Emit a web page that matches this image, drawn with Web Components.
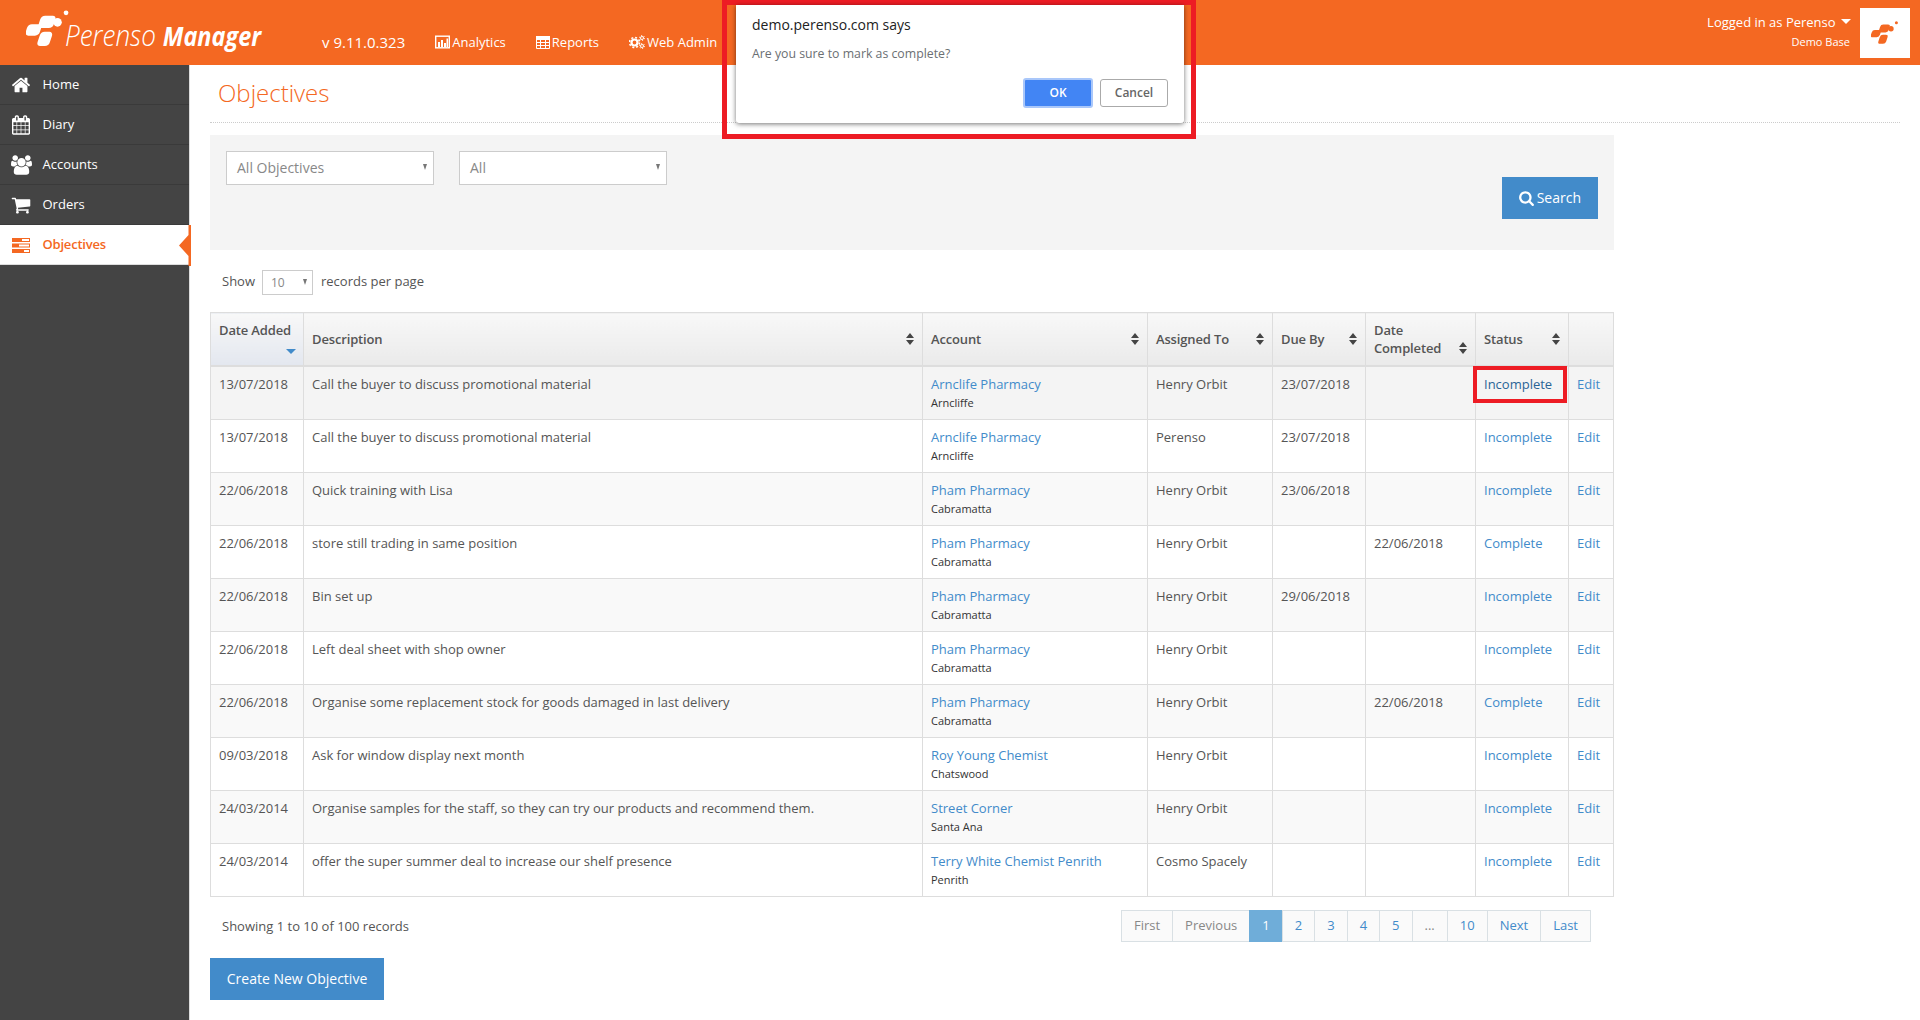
<!DOCTYPE html>
<html lang="en">
<head>
<meta charset="utf-8">
<title>Perenso Manager - Objectives</title>
<style>
  html, body { margin: 0; padding: 0; background: #fff; }
  body { font: 13px/20px "Open Sans", "Liberation Sans", sans-serif; color: #555; width: 1920px; height: 1020px; overflow: hidden; }
  .shell { display: flex; height: 955px; }
</style>
</head>
<body>
<pr-header></pr-header>
<div class="shell">
  <pr-sidenav>
    <pr-nav-item icon="home">Home</pr-nav-item>
    <pr-nav-item icon="calendar">Diary</pr-nav-item>
    <pr-nav-item icon="users">Accounts</pr-nav-item>
    <pr-nav-item icon="cart">Orders</pr-nav-item>
    <pr-nav-item icon="objectives" active>Objectives</pr-nav-item>
  </pr-sidenav>
  <pr-objectives-page></pr-objectives-page>
</div>
<pr-alert></pr-alert>

<script>
const ICONS = {
  home: '<svg viewBox="0 0 1792 1792" width="20" height="20" fill="currentColor"><path d="M1472 992v480q0 26-19 45t-45 19h-384v-384h-256v384h-384q-26 0-45-19t-19-45v-480q0-1 .5-3t.5-3l575-474 575 474q1 2 1 6zm223-69l-62 74q-8 9-21 11h-3q-13 0-21-7l-692-577-692 577q-12 8-24 7-13-2-21-11l-62-74q-8-10-7-23.500t11-21.500l719-599q32-26 76-26t76 26l244 204v-195q0-14 9-23t23-9h192q14 0 23 9t9 23v408l219 182q10 8 11 21.500t-7 23.500z"/></svg>',
  calendar: '<svg viewBox="0 0 1664 1792" width="18" height="20" fill="currentColor"><path d="M128 1664h288v-288h-288v288zm352 0h320v-288h-320v288zm-352-352h288v-320h-288v320zm352 0h320v-320h-320v320zm-352-384h288v-288h-288v288zm736 736h320v-288h-320v288zm-384-736h320v-288h-320v288zm768 736h288v-288h-288v288zm-384-352h320v-320h-320v320zm-352-864v-288q0-13-9.500-22.500t-22.500-9.500h-64q-13 0-22.500 9.500t-9.500 22.500v288q0 13 9.500 22.500t22.500 9.500h64q13 0 22.500-9.500t9.500-22.500zm736 864h288v-320h-288v320zm-384-384h320v-288h-320v288zm384 0h288v-288h-288v288zm32-480v-288q0-13-9.500-22.500t-22.500-9.500h-64q-13 0-22.500 9.500t-9.500 22.500v288q0 13 9.500 22.500t22.500 9.500h64q13 0 22.500-9.500t9.500-22.500zm384-64v1280q0 52-38 90t-90 38h-1408q-52 0-90-38t-38-90v-1280q0-52 38-90t90-38h128v-96q0-66 47-113t113-47h64q66 0 113 47t47 113v96h384v-96q0-66 47-113t113-47h64q66 0 113 47t47 113v96h128q52 0 90 38t38 90z"/></svg>',
  users: '<svg viewBox="0 0 1920 1792" width="21" height="20" fill="currentColor"><path d="M593 896q-162 5-265 128h-134q-82 0-138-40.500t-56-118.500q0-353 124-353 6 0 43.500 21t97.500 42.500 119 21.500q67 0 133-23-5 37-5 66 0 139 81 256zm1071 637q0 120-73 189.500t-194 69.500h-874q-121 0-194-69.500t-73-189.500q0-53 3.500-103.500t14-109 26.500-108.500 43-97.500 62-81 85.500-53.500 111.500-20q10 0 43 21.500t73 48 107 48 135 21.500 135-21.500 107-48 73-48 43-21.500q61 0 111.500 20t85.500 53.500 62 81 43 97.500 26.500 108.500 14 109 3.500 103.500zm-1024-1277q0 106-75 181t-181 75-181-75-75-181 75-181 181-75 181 75 75 181zm704 384q0 159-112.500 271.500t-271.500 112.500-271.500-112.500-112.500-271.500 112.500-271.500 271.500-112.500 271.500 112.500 112.500 271.500zm576 225q0 78-56 118.500t-138 40.500h-134q-103-123-265-128 81-117 81-256 0-29-5-66 66 23 133 23 59 0 119-21.500t97.500-42.500 43.500-21q124 0 124 353zm-128-609q0 106-75 181t-181 75-181-75-75-181 75-181 181-75 181 75 75 181z"/></svg>',
  cart: '<svg viewBox="0 0 1792 1792" width="20" height="20" fill="currentColor"><path d="M704 1536q0 52-38 90t-90 38-90-38-38-90 38-90 90-38 90 38 38 90zm896 0q0 52-38 90t-90 38-90-38-38-90 38-90 90-38 90 38 38 90zm128-1088v512q0 24-16.500 42.500t-40.500 21.500l-1044 122q13 60 13 70 0 16-24 64h920q26 0 45 19t19 45-19 45-45 19h-1024q-26 0-45-19t-19-45q0-11 8-31.500t16-36 21.500-40 15.500-29.500l-177-823h-204q-26 0-45-19t-19-45 19-45 45-19h256q16 0 28.500 6.500t19.500 15.500 13 24.500 8 26 5.500 29.500 4.500 26h1201q26 0 45 19t19 45z"/></svg>',
  objectives: '<svg viewBox="0 0 18 15" width="18" height="15"><rect width="18" height="4" fill="currentColor"/><rect y="5.500" width="18" height="4" fill="currentColor"/><rect y="11" width="18" height="4" fill="currentColor"/><rect x="10" y="1" width="7" height="2" fill="#fff"/><rect x="7" y="6.500" width="10" height="2" fill="#fff"/><rect x="12" y="12" width="5" height="2" fill="#fff"/></svg>',
  analytics: '<svg viewBox="0 0 15 14" width="15" height="14"><rect x=".7" y="1.200" width="13.600" height="11.600" fill="none" stroke="#fff" stroke-width="1.400"/><path d="M3 7h2v5H3zM6 5h2v7H6zM9 8h2v4H9zM11.500 3.500h1.500V12h-1.500z" fill="#fff"/></svg>',
  table: '<svg viewBox="0 0 14 13" width="14" height="13"><path d="M.5.500h13v12H.500z" fill="none" stroke="#fff"/><path d="M0 .500h14v3H0zM0 6.500h14M0 9.500h14M4.500 3v9M9.500 3v9" fill="none" stroke="#fff"/><rect y=".500" width="14" height="3" fill="#fff"/></svg>',
  cogs: '<svg viewBox="0 0 16 14" width="16" height="14" fill="none" stroke="#fff"><circle cx="5.500" cy="7.500" r="3" stroke-width="2.200"/><circle cx="5.500" cy="7.500" r="5" stroke-width="1.600" stroke-dasharray="2 1.930"/><circle cx="13" cy="3" r="1.500" stroke-width="1"/><circle cx="13" cy="3" r="2.500" stroke-width="1" stroke-dasharray="1.200 1.420"/><circle cx="13" cy="11" r="1.500" stroke-width="1"/><circle cx="13" cy="11" r="2.500" stroke-width="1" stroke-dasharray="1.200 1.420"/></svg>',
  search: '<svg viewBox="0 0 1664 1792" width="15" height="16" fill="currentColor"><path d="M1152 832q0-185-131.500-316.500t-316.500-131.500-316.500 131.500-131.500 316.500 131.500 316.500 316.500 131.500 316.500-131.500 131.500-316.500zm512 832q0 52-38 90t-90 38q-54 0-90-38l-343-342q-179 124-399 124-143 0-273.500-55.500t-225-150-150-225-55.500-273.500 55.500-273.500 150-225 225-150 273.500-55.500 273.500 55.500 225 150 150 225 55.500 273.500q0 220-124 399l343 343q37 37 37 90z"/></svg>'
};

// the four blobs of the Perenso mark
const logoMark = (w, h, fill) => `<svg viewBox="0 0 46 40" width="${w}" height="${h}" fill="${fill}">
  <rect x="0" y="15" width="15" height="12" rx="4" transform="skewX(-18) translate(7 0)"/>
  <rect x="13" y="6" width="16" height="13" rx="4" transform="skewX(-18) translate(5 0)"/>
  <rect x="12" y="23" width="13" height="15" rx="4" transform="skewX(-18) translate(11 0)"/>
  <circle cx="33" cy="13" r="4.500"/>
  <circle cx="42" cy="3" r="2.500"/>
</svg>`;

class PrHeader extends HTMLElement {
  constructor() {
    super();
    this.attachShadow({ mode: 'open' });
    this.shadowRoot.innerHTML = `
      <style>
        :host { display: flex; align-items: center; height: 65px; background: #f46822; color: #fff; padding-left: 26px; box-sizing: border-box; }
        .brand { display: flex; align-items: center; width: 296px; flex: none; }
        .brand svg { margin-top: -7px; flex: none; }
        .brand-text { font-size: 30px; line-height: 34px; font-style: italic; white-space: nowrap; transform: scaleX(.87); transform-origin: left center; margin: 5px 0 0 -5px; }
        .brand-text b { font-weight: 700; font-size: 27px; }
        .brand-text span { font-weight: 300; }
        nav { display: flex; align-items: center; gap: 30px; font-size: 13px; margin-top: 19px; }
        .ver { font-size: 15px; }
        a { display: flex; align-items: center; gap: 2px; color: #fff; text-decoration: none; }
        svg { display: block; }
        .user { margin-left: auto; text-align: right; padding-right: 9px; margin-top: -1px; }
        .user div:first-child { font-size: 13px; line-height: 20px; }
        .user div:last-child { font-size: 11px; line-height: 20px; padding-right: 1px; }
        .caret { display: inline-block; border: 5px solid transparent; border-top: 5px solid #fff; border-bottom: 0; margin-left: 2px; vertical-align: 3px; border-left-width: 5.500px; border-right-width: 5.500px; }
        .box { width: 50px; height: 50px; background: #fff; margin-right: 10px; display: flex; align-items: center; justify-content: center; }
      </style>
      <div class="brand">${logoMark(44, 38, '#fff')}<div class="brand-text"><span>Perenso</span> <b>Manager</b></div></div>
      <nav>
        <span class="ver">v 9.11.0.323</span>
        <a>${ICONS.analytics}Analytics</a>
        <a>${ICONS.table}Reports</a>
        <a>${ICONS.cogs}Web Admin</a>
      </nav>
      <div class="user">
        <div>Logged in as Perenso <i class="caret"></i></div>
        <div>Demo Base</div>
      </div>
      <div class="box">${logoMark(28, 24, '#f46822')}</div>
    `;
  }
}

class PrSidenav extends HTMLElement {
  constructor() {
    super();
    this.attachShadow({ mode: 'open' });
    this.shadowRoot.innerHTML = `
      <style>
        :host { display: block; width: 189px; flex: none; background: #444; border-right: 1px solid #ddd; }
      </style>
      <slot></slot>
    `;
  }
}

class PrNavItem extends HTMLElement {
  constructor() {
    super();
    this.attachShadow({ mode: 'open' });
    this.shadowRoot.innerHTML = `
      <style>
        :host { display: flex; align-items: center; height: 40px; box-sizing: border-box; color: #fff; font-size: 13px; border-bottom: 1px solid #3a3a3a; position: relative; padding-bottom: 2px; }
        :host([active]) { background: #fff; color: #f46822; font-weight: 600; letter-spacing: -.2px; border-bottom: 1px solid #ddd; }
        .ico { width: 42.500px; flex: none; display: flex; justify-content: center; box-sizing: border-box; margin-top: 3px; }
        svg { display: block; }
        .tip { display: none; position: absolute; right: -2px; top: 0; bottom: -1px; width: 12px; height: 41px; }
        :host([active]) .tip { display: block; }
      </style>
      <span class="ico">${ICONS[this.getAttribute('icon')] || ''}</span>
      <slot></slot>
      <svg class="tip" viewBox="0 0 12 41" preserveAspectRatio="none"><path d="M9.500 0H12V41H9.500V31L0 20.500 9.500 10z" fill="#f46822"/></svg>
    `;
  }
}

class PrButton extends HTMLElement {
  constructor() {
    super();
    this.attachShadow({ mode: 'open' });
    this.shadowRoot.innerHTML = `
      <style>
        :host { display: inline-flex; align-items: center; justify-content: center; gap: 3px; background: #428bca; color: #fff; font-size: 14px; height: 42px; box-sizing: border-box; padding: 0 17px; }
        svg { display: block; }
      </style>
      ${ICONS[this.getAttribute('icon')] || ''}<slot></slot>
    `;
  }
}

class PrSelect extends HTMLElement {
  constructor() {
    super();
    this.attachShadow({ mode: 'open' });
    this.shadowRoot.innerHTML = `
      <style>
        :host { display: flex; align-items: center; justify-content: space-between; box-sizing: border-box; height: 34px; width: 208px; background: #fff; border: 1px solid #ccc; color: #888; font-size: 14px; padding: 0 6px 0 10px; }
        :host([small]) { width: 51px; height: 25px; font-size: 12px; padding: 0 5px 0 8px; margin-right: 1px; }
        i { border: 4px solid transparent; border-top: 6px solid #777; border-bottom: 0; margin-top: -2px; border-left-width: 2.500px; border-right-width: 2.500px; }
      </style>
      <slot></slot><i></i>
    `;
  }
}

class PrObjectivesTable extends HTMLElement {
  constructor() {
    super();
    this.attachShadow({ mode: 'open' });
    const rows = [
      ['13/07/2018', 'Call the buyer to discuss promotional material', 'Arnclife Pharmacy', 'Arncliffe', 'Henry Orbit', '23/07/2018', '', 'Incomplete'],
      ['13/07/2018', 'Call the buyer to discuss promotional material', 'Arnclife Pharmacy', 'Arncliffe', 'Perenso', '23/07/2018', '', 'Incomplete'],
      ['22/06/2018', 'Quick training with Lisa', 'Pham Pharmacy', 'Cabramatta', 'Henry Orbit', '23/06/2018', '', 'Incomplete'],
      ['22/06/2018', 'store still trading in same position', 'Pham Pharmacy', 'Cabramatta', 'Henry Orbit', '', '22/06/2018', 'Complete'],
      ['22/06/2018', 'Bin set up', 'Pham Pharmacy', 'Cabramatta', 'Henry Orbit', '29/06/2018', '', 'Incomplete'],
      ['22/06/2018', 'Left deal sheet with shop owner', 'Pham Pharmacy', 'Cabramatta', 'Henry Orbit', '', '', 'Incomplete'],
      ['22/06/2018', 'Organise some replacement stock for goods damaged in last delivery', 'Pham Pharmacy', 'Cabramatta', 'Henry Orbit', '', '22/06/2018', 'Complete'],
      ['09/03/2018', 'Ask for window display next month', 'Roy Young Chemist', 'Chatswood', 'Henry Orbit', '', '', 'Incomplete'],
      ['24/03/2014', 'Organise samples for the staff, so they can try our products and recommend them.', 'Street Corner', 'Santa Ana', 'Henry Orbit', '', '', 'Incomplete'],
      ['24/03/2014', 'offer the super summer deal to increase our shelf presence', 'Terry White Chemist Penrith', 'Penrith', 'Cosmo Spacely', '', '', 'Incomplete']
    ];
    const sort = '<svg class="sort" viewBox="0 0 8 12" width="8" height="12"><path d="M4 0l4 5H0zM4 12L0 7h8z" fill="#444"/></svg>';
    const body = rows.map((r, i) => `
      <tr class="${i === 0 ? 'hover' : ''}">
        <td>${r[0]}</td>
        <td>${r[1]}</td>
        <td><a>${r[2]}</a><small>${r[3]}</small></td>
        <td>${r[4]}</td>
        <td>${r[5]}</td>
        <td>${r[6]}</td>
        <td class="status"><a>${r[7]}</a>${i === 0 ? '<span class="mark"></span>' : ''}</td>
        <td><a>Edit</a></td>
      </tr>`).join('');
    this.shadowRoot.innerHTML = `
      <style>
        :host { display: block; }
        table { border-collapse: collapse; table-layout: fixed; width: 1403px; font-size: 13px; line-height: 20px; color: #555; }
        th, td { border: 1px solid #ddd; text-align: left; vertical-align: top; }
        td { padding: 7px 8px 7px; }
        th { padding: 8px; position: relative; height: 36px; font-weight: 600; letter-spacing: -.15px; line-height: 18px; vertical-align: middle; background: linear-gradient(#f8f8f8, #eaeaea); border-bottom: 2px solid #ddd; }
        th.sorted { vertical-align: top; background: linear-gradient(#f8f8f8, #e3e7ef); }
        tr:nth-child(odd) td { background: #f9f9f9; }
        tr.hover td { background: #f4f4f4 !important; }
        a { color: #428bca; display: block; white-space: nowrap; }
        small { display: block; font-size: 11px; line-height: 18px; color: #333; }
        .sort { position: absolute; right: 8px; top: 20px; }
        .low .sort { top: 29px; }
        .desc { position: absolute; right: 7px; bottom: 11px; border: 5px solid transparent; border-top: 5px solid #428bca; border-bottom: 0; }
        .status { position: relative; }
        .hover .status a { color: #2a6496; }
        .mark { position: absolute; left: -3px; top: -1px; width: 94px; height: 37px; box-sizing: border-box; border: 4px solid #ed1c24; }
      </style>
      <table>
        <colgroup><col style="width:93px"><col style="width:619px"><col style="width:225px"><col style="width:125px"><col style="width:93px"><col style="width:110px"><col style="width:93px"><col style="width:45px"></colgroup>
        <thead><tr>
          <th class="sorted">Date Added<i class="desc"></i></th>
          <th>Description${sort}</th>
          <th>Account${sort}</th>
          <th>Assigned To${sort}</th>
          <th>Due By${sort}</th>
          <th class="low">Date<br>Completed${sort}</th>
          <th>Status${sort}</th>
          <th></th>
        </tr></thead>
        <tbody>${body}</tbody>
      </table>
    `;
  }
}

class PrPager extends HTMLElement {
  constructor() {
    super();
    this.attachShadow({ mode: 'open' });
    const items = [['First', 'off'], ['Previous', 'off'], ['1', 'on'], ['2'], ['3'], ['4'], ['5'], ['...', 'off'], ['10'], ['Next'], ['Last']];
    this.shadowRoot.innerHTML = `
      <style>
        :host { display: flex; font-size: 13px; }
        span { display: block; height: 32px; box-sizing: border-box; line-height: 29px; padding: 0 12px; background: #fafafa; border: 1px solid #d9e0e4; margin-left: -1px; color: #428bca; }
        .off { color: #888; }
        .on { background: #6fadd9; border-color: #6fadd9; color: #fff; }
      </style>
      ${items.map(i => `<span class="${i[1] || ''}">${i[0]}</span>`).join('')}
    `;
  }
}

class PrObjectivesPage extends HTMLElement {
  constructor() {
    super();
    this.attachShadow({ mode: 'open' });
    this.shadowRoot.innerHTML = `
      <style>
        :host { display: block; flex: 1; padding-left: 20px; padding-right: 20px; min-width: 0; }
        h1 { margin: 0; height: 58px; box-sizing: border-box; padding: 10px 0 0 8px; font-size: 24px; line-height: 36px; font-weight: 300; color: #f46822; border-bottom: 1px dotted #ccc; }
        .filters { display: flex; align-items: flex-start; width: 1404px; height: 115px; margin-top: 12px; box-sizing: border-box; padding: 16px; background: #f4f4f4; gap: 25px; }
        .filters pr-button { margin: 26px 0 0 auto; }
        .len { display: flex; align-items: flex-start; gap: 7px; height: 25px; line-height: 22px; margin: 20px 0 17px; padding-left: 12px; }
        .foot { display: flex; justify-content: space-between; align-items: center; width: 1404px; box-sizing: border-box; margin-top: 13px; padding: 0 23px 0 12px; }
        pr-button.create { margin-top: 16px; width: 174px; padding: 0; }
      </style>
      <h1>Objectives</h1>
      <div class="filters">
        <pr-select>All Objectives</pr-select>
        <pr-select>All</pr-select>
        <pr-button icon="search">Search</pr-button>
      </div>
      <div class="len">Show <pr-select small>10</pr-select> records per page</div>
      <pr-objectives-table></pr-objectives-table>
      <div class="foot"><span>Showing 1 to 10 of 100 records</span><pr-pager></pr-pager></div>
      <pr-button class="create">Create New Objective</pr-button>
    `;
  }
}

class PrAlert extends HTMLElement {
  constructor() {
    super();
    this.attachShadow({ mode: 'open' });
    this.shadowRoot.innerHTML = `
      <style>
        :host { position: absolute; left: 722px; top: 0; width: 474px; height: 139px; box-sizing: border-box; border: 5px solid #ed1c24; }
        .dlg { position: absolute; left: 9px; top: 0; width: 448px; height: 118px; box-sizing: border-box; background: #fff; border-radius: 0 0 3px 3px; box-shadow: 0 1px 5px rgba(0,0,0,.55); padding: 10px 16px 0; }
        .title { font-size: 14px; line-height: 20px; color: #222; }
        .msg { font-size: 12.300px; line-height: 20px; color: #6b6f73; margin-top: 9px; }
        .btns { display: flex; justify-content: flex-end; align-items: center; gap: 7px; margin-top: 14px; }
        .ok, .cancel { display: flex; align-items: center; justify-content: center; box-sizing: border-box; font-size: 12px; font-weight: 600; border-radius: 3px; }
        .ok { width: 70px; height: 30px; background: #4285f4; color: #fff; border: 2px solid #a9c7fa; }
        .cancel { width: 68px; height: 28px; background: #fff; color: #666; border: 1px solid #aaa; }
      </style>
      <div class="dlg">
        <div class="title">demo.perenso.com says</div>
        <div class="msg">Are you sure to mark as complete?</div>
        <div class="btns"><span class="ok">OK</span><span class="cancel">Cancel</span></div>
      </div>
    `;
  }
}

customElements.define('pr-header', PrHeader);
customElements.define('pr-sidenav', PrSidenav);
customElements.define('pr-nav-item', PrNavItem);
customElements.define('pr-button', PrButton);
customElements.define('pr-select', PrSelect);
customElements.define('pr-objectives-table', PrObjectivesTable);
customElements.define('pr-pager', PrPager);
customElements.define('pr-objectives-page', PrObjectivesPage);
customElements.define('pr-alert', PrAlert);
</script>
</body>
</html>
